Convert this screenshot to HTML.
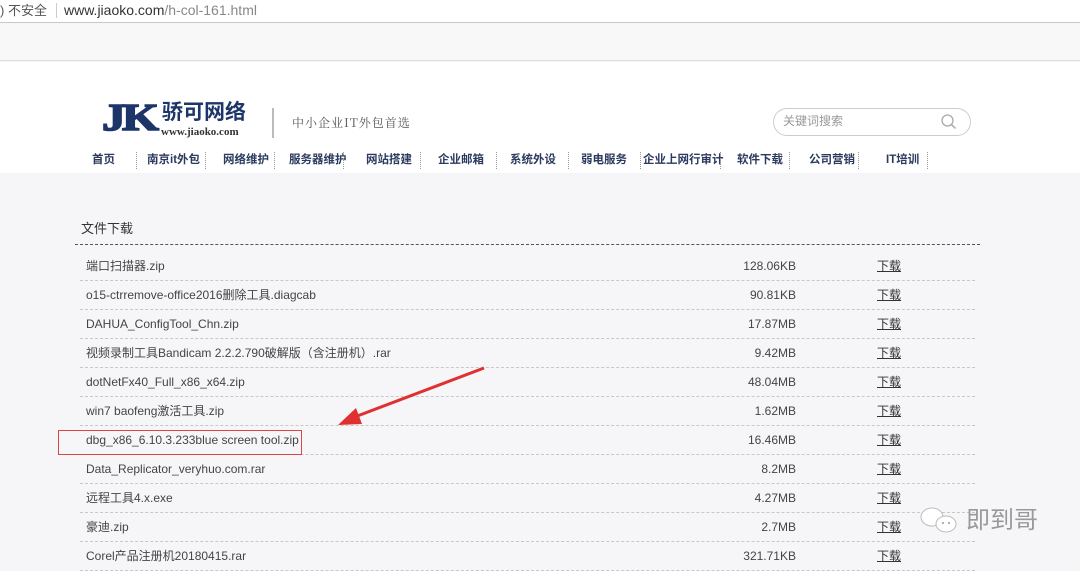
<!DOCTYPE html>
<html><head><meta charset="utf-8"><style>
*{margin:0;padding:0;box-sizing:border-box}
body{width:1080px;height:571px;overflow:hidden;background:#f6f6f8;font-family:"Liberation Sans","Noto Sans CJK SC",sans-serif;position:relative}
.a{position:absolute;white-space:nowrap;line-height:1.2}
#top{position:absolute;left:0;top:0;width:1080px;height:23px;background:#fff;border-bottom:1px solid #c8c8c8}
#bar{position:absolute;left:0;top:24px;width:1080px;height:37px;background:#f8f8f8;border-bottom:1px solid #ddd}
#hdr{position:absolute;left:0;top:62px;width:1080px;height:111px;background:#fff}
.nav{position:absolute;top:153px;font-size:11.5px;line-height:14px;font-weight:bold;color:#2b3a5e}
.sep{position:absolute;top:152px;height:17px;border-left:1px dotted #999}
.row{position:absolute;left:80px;width:895px;height:29px;border-bottom:1px dashed #c8c8c8;font-size:12px;color:#444;line-height:14px}
.row span{position:absolute;top:7px;line-height:14px;white-space:nowrap}
.row .n{left:6px}
.row .s{right:179px}
.row .d{left:797px;text-decoration:underline;color:#333}
</style></head><body>
<div id="top">
<div class="a" style="left:0;top:3px;font-size:13px;color:#555">) 不安全</div>
<div class="a" style="left:56px;top:3px;height:15px;border-left:1px solid #ccc"></div>
<div class="a" style="left:64px;top:2px;font-size:14px;color:#333">www.jiaoko.com<span style="color:#888">/h-col-161.html</span></div>
</div>
<div id="bar"></div>
<div id="hdr"></div>
<div class="a" style="left:102px;top:98px;font-family:'Liberation Serif',serif;font-weight:bold;font-size:38px;line-height:40px;color:#1d3568;letter-spacing:-3px;transform:scaleX(1.25);transform-origin:left;-webkit-text-stroke:1.5px #1d3568">JK</div>
<div class="a" style="left:162px;top:100px;font-size:21px;line-height:26px;font-weight:bold;color:#1d3568;letter-spacing:0px">骄可网络</div>
<div class="a" style="left:161px;top:126px;font-family:'Liberation Serif',serif;font-size:11px;font-weight:bold;color:#333">www.jiaoko.com</div>
<div class="a" style="left:272px;top:108px;height:30px;border-left:2px solid #bbb"></div>
<div class="a" style="left:292px;top:116px;font-size:12px;color:#555;font-family:'Noto Serif CJK SC',serif;letter-spacing:1px">中小企业IT外包首选</div>
<div class="a" style="left:773px;top:108px;width:198px;height:28px;border:1px solid #ccc;border-radius:14px;background:#fff"></div>
<div class="a" style="left:783px;top:114px;font-size:12px;color:#999">关键词搜索</div>
<svg class="a" style="left:940px;top:113px" width="18" height="18"><circle cx="7.5" cy="7.5" r="5.5" fill="none" stroke="#aaa" stroke-width="1.3"/><path d="M11.5 11.5L15.5 15.5" stroke="#aaa" stroke-width="1.5"/></svg>
<div class="nav" style="left:92px">首页</div>
<div class="nav" style="left:147px">南京it外包</div>
<div class="nav" style="left:223px">网络维护</div>
<div class="nav" style="left:289px">服务器维护</div>
<div class="nav" style="left:366px">网站搭建</div>
<div class="nav" style="left:438px">企业邮箱</div>
<div class="nav" style="left:510px">系统外设</div>
<div class="nav" style="left:581px">弱电服务</div>
<div class="nav" style="left:643px">企业上网行审计</div>
<div class="nav" style="left:737px">软件下载</div>
<div class="nav" style="left:809px">公司营销</div>
<div class="nav" style="left:886px">IT培训</div>
<div class="sep" style="left:136px"></div><div class="sep" style="left:205px"></div><div class="sep" style="left:274px"></div><div class="sep" style="left:343px"></div><div class="sep" style="left:420px"></div><div class="sep" style="left:496px"></div><div class="sep" style="left:568px"></div><div class="sep" style="left:640px"></div><div class="sep" style="left:720px"></div><div class="sep" style="left:789px"></div><div class="sep" style="left:858px"></div><div class="sep" style="left:927px"></div>
<div class="a" style="left:81px;top:221px;font-size:13px;color:#333">文件下载</div>
<div class="a" style="left:75px;top:244px;width:905px;border-top:1px dashed #555"></div>
<div class="row" style="top:252px"><span class="n">端口扫描器.zip</span><span class="s">128.06KB</span><span class="d">下载</span></div>
<div class="row" style="top:281px"><span class="n">o15-ctrremove-office2016删除工具.diagcab</span><span class="s">90.81KB</span><span class="d">下载</span></div>
<div class="row" style="top:310px"><span class="n">DAHUA_ConfigTool_Chn.zip</span><span class="s">17.87MB</span><span class="d">下载</span></div>
<div class="row" style="top:339px"><span class="n">视频录制工具Bandicam 2.2.2.790破解版（含注册机）.rar</span><span class="s">9.42MB</span><span class="d">下载</span></div>
<div class="row" style="top:368px"><span class="n">dotNetFx40_Full_x86_x64.zip</span><span class="s">48.04MB</span><span class="d">下载</span></div>
<div class="row" style="top:397px"><span class="n">win7 baofeng激活工具.zip</span><span class="s">1.62MB</span><span class="d">下载</span></div>
<div class="row" style="top:426px"><span class="n">dbg_x86_6.10.3.233blue screen tool.zip</span><span class="s">16.46MB</span><span class="d">下载</span></div>
<div class="row" style="top:455px"><span class="n">Data_Replicator_veryhuo.com.rar</span><span class="s">8.2MB</span><span class="d">下载</span></div>
<div class="row" style="top:484px"><span class="n">远程工具4.x.exe</span><span class="s">4.27MB</span><span class="d">下载</span></div>
<div class="row" style="top:513px"><span class="n">豪迪.zip</span><span class="s">2.7MB</span><span class="d">下载</span></div>
<div class="row" style="top:542px"><span class="n">Corel产品注册机20180415.rar</span><span class="s">321.71KB</span><span class="d">下载</span></div>
<div class="a" style="left:58px;top:430px;width:244px;height:25px;border:1px solid #d44"></div>
<svg class="a" style="left:0;top:0" width="1080" height="571"><path d="M484 368L352 418" stroke="#e03030" stroke-width="3"/><path d="M338 425L356 408L362 424Z" fill="#e03030"/></svg>
<svg class="a" style="left:916px;top:505px" width="50" height="32"><ellipse cx="16" cy="12" rx="11" ry="9" fill="#fff" stroke="#bbb"/><ellipse cx="30" cy="19" rx="10" ry="8" fill="#fff" stroke="#bbb"/><circle cx="27" cy="18" r="1" fill="#999"/><circle cx="33" cy="18" r="1" fill="#999"/></svg>
<div class="a" style="left:966px;top:507px;font-size:24px;color:#999">即到哥</div>
</body></html>
